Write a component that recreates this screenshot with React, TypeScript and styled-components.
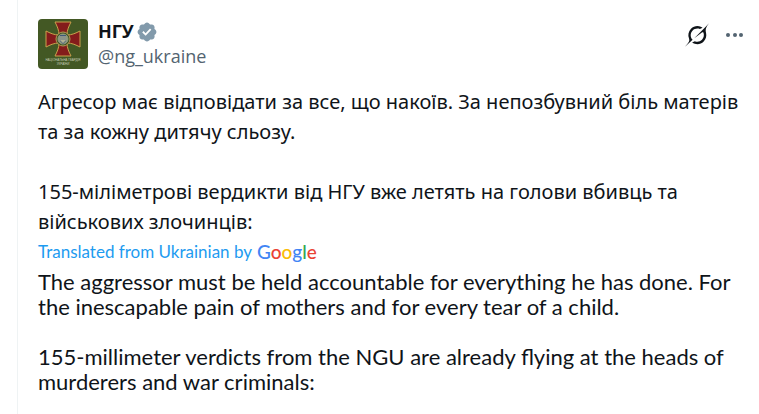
import React from "react";
import styled, { createGlobalStyle } from "styled-components";

const GlobalStyle = createGlobalStyle`
  * { box-sizing: border-box; }
  body {
    margin: 0;
    background: #ffffff;
    color: #0f1419;
    font-family: Lato, "Liberation Sans", sans-serif;
  }
`;

const Page = styled.main`
  min-height: 100vh;
  margin-left: 17px;
  padding: 19px 12px 16px 20px;
  border-left: 1px solid #eff3f4;
`;

const Header = styled.header`
  display: flex;
  align-items: flex-start;
  gap: 10px;
`;

const AvatarLink = styled.a`
  display: block;
  width: 50px;
  height: 50px;
  border-radius: 4px;
  overflow: hidden;
  flex: none;
`;

const Identity = styled.div`
  display: flex;
  flex-direction: column;
  flex: 1;
`;

const NameLink = styled.a`
  display: flex;
  align-items: center;
  gap: 2px;
  height: 25px;
  color: #0f1419;
  font: 700 18px/25px "Open Sans", sans-serif;
  text-decoration: none;
`;

const HandleLink = styled.a`
  color: #536471;
  font: 400 18px/25px "Open Sans", sans-serif;
  text-decoration: none;
`;

const Actions = styled.div`
  display: flex;
  gap: 14px;
  padding-top: 4px;
`;

const IconButton = styled.button`
  display: flex;
  padding: 0;
  border: 0;
  background: none;
  cursor: pointer;
`;

const Original = styled.p`
  margin: 18px 0 0;
  font: 400 20px/30px "Noto Sans", sans-serif;
  white-space: pre-line;
`;

const Attribution = styled.div`
  display: flex;
  align-items: center;
  gap: 5px;
  height: 30px;
`;

const SourceLink = styled.a`
  color: #1d9bf0;
  font-size: 17px;
  line-height: 24px;
  text-decoration: none;
`;

const GoogleLink = styled.a`
  font: 500 19px/24px Lato, sans-serif;
  text-decoration: none;
`;

const Letter = styled.span<{ $color: string }>`
  color: ${(p) => p.$color};
`;

const Translation = styled.p`
  margin: 2px 0 0;
  font-size: 22px;
  line-height: 25px;
  white-space: pre-line;
`;

const googleLetters: [string, string][] = [
  ["G", "#4285f4"],
  ["o", "#ea4335"],
  ["o", "#fbbc05"],
  ["g", "#4285f4"],
  ["l", "#34a853"],
  ["e", "#ea4335"],
];

const arm = "M-8 -17H8C6 -13 4 -9 4 -4H-4C-4 -9 -6 -13 -8 -17Z";

const Emblem = () => (
  <svg width="50" height="50" viewBox="0 0 50 50" aria-hidden="true">
    <rect width="50" height="50" fill="#435824" />
    <g transform="translate(25 20)" fill="#841c1b" stroke="#c9a24c" strokeWidth="1">
      {[0, 90, 180, 270].map((angle) => (
        <path key={angle} d={arm} transform={`rotate(${angle})`} />
      ))}
      <circle r="7" fill="#435824" stroke="#b39a58" />
      <circle r="5" fill="#8f9a80" stroke="#8f9a80" />
      <path d="M-3 -4H3V2L0 5L-3 2Z" fill="#3f5878" stroke="none" />
      <path d="M-2 -3V2H2V-3M0 -3V4" fill="none" stroke="#d8cf9c" />
    </g>
    <g fill="#c5cbb5" fontFamily="Liberation Sans" fontSize="3" textAnchor="middle">
      <text x="25" y="42">НАЦІОНАЛЬНА ГВАРДІЯ</text>
      <text x="25" y="46">УКРАЇНИ</text>
    </g>
  </svg>
);

const VerifiedBadge = () => (
  <svg width="22" height="22" viewBox="0 0 22 22" fill="#829aab" role="img" aria-label="Verified">
    <path d="M20.396 11c-.018-.646-.215-1.275-.57-1.816-.354-.54-.852-.972-1.438-1.246.223-.607.27-1.264.14-1.897-.131-.634-.437-1.218-.882-1.687-.47-.445-1.053-.75-1.687-.882-.633-.13-1.29-.083-1.897.14-.273-.587-.704-1.086-1.245-1.44S11.647 1.62 11 1.604c-.646.017-1.273.213-1.813.568s-.969.854-1.24 1.44c-.608-.223-1.267-.272-1.902-.14-.635.13-1.22.436-1.69.882-.445.47-.749 1.055-.878 1.688-.13.633-.08 1.29.144 1.896-.587.274-1.087.705-1.443 1.245-.356.54-.555 1.17-.574 1.817.02.647.218 1.276.574 1.817.356.54.856.972 1.443 1.245-.224.606-.274 1.263-.144 1.896.13.634.433 1.218.877 1.688.47.443 1.054.747 1.687.878.633.132 1.29.084 1.897-.136.274.586.705 1.084 1.246 1.439.54.354 1.17.551 1.816.569.647-.016 1.276-.213 1.817-.567s.972-.854 1.245-1.44c.604.239 1.266.296 1.903.164.636-.132 1.22-.447 1.68-.907.46-.46.776-1.044.908-1.681s.075-1.299-.165-1.903c.586-.274 1.084-.705 1.439-1.246.354-.54.551-1.17.569-1.816zM9.662 14.85l-3.429-3.428 1.293-1.302 2.072 2.072 4.4-4.794 1.347 1.246z" />
  </svg>
);

const GrokIcon = () => (
  <svg width="24" height="24" viewBox="0 0 33 32" fill="#0f1419" aria-hidden="true">
    <path d="M12.745 20.54l10.97-8.19c.539-.4 1.307-.244 1.564.38 1.349 3.288.746 7.241-1.938 9.955-2.683 2.714-6.417 3.31-9.83 1.954l-3.728 1.745c5.347 3.697 11.84 2.782 15.898-1.324 3.219-3.255 4.216-7.692 3.284-11.693l.008.009c-1.351-5.878.332-8.227 3.782-13.031L33 0l-4.54 4.59v-.014L12.743 20.544m-2.263 1.987c-3.837-3.707-3.175-9.446.1-12.755 2.42-2.449 6.388-3.448 9.852-1.979l3.72-1.737c-.67-.49-1.53-1.017-2.515-1.387-4.455-1.854-9.789-.931-13.41 2.728-3.483 3.523-4.579 8.94-2.697 13.561 1.405 3.454-.899 5.898-3.22 8.364C1.49 30.2.666 31.074 0 32l10.478-9.466" />
  </svg>
);

const MoreIcon = () => (
  <svg width="24" height="24" viewBox="0 0 24 24" fill="#536471" aria-hidden="true">
    <circle cx="5" cy="12" r="2" />
    <circle cx="12" cy="12" r="2" />
    <circle cx="18" cy="12" r="2" />
  </svg>
);

export default function App() {
  return (
    <>
      <GlobalStyle />
      <Page>
        <article>
          <Header>
            <AvatarLink href="#profile" aria-label="НГУ">
              <Emblem />
            </AvatarLink>
            <Identity>
              <NameLink href="#profile">
                НГУ
                <VerifiedBadge />
              </NameLink>
              <HandleLink href="#profile">@ng_ukraine</HandleLink>
            </Identity>
            <Actions>
              <IconButton type="button" aria-label="Grok">
                <GrokIcon />
              </IconButton>
              <IconButton type="button" aria-label="More">
                <MoreIcon />
              </IconButton>
            </Actions>
          </Header>
          <Original lang="uk">
            {"Агресор має відповідати за все, що накоїв. За непозбувний біль матерів та за кожну дитячу сльозу.\n\n155-міліметрові вердикти від НГУ вже летять на голови вбивць та військових злочинців:"}
          </Original>
          <Attribution>
            <SourceLink href="#translation">Translated from Ukrainian by</SourceLink>
            <GoogleLink href="#google" aria-label="Google">
              {googleLetters.map(([letter, color], i) => (
                <Letter key={i} $color={color}>
                  {letter}
                </Letter>
              ))}
            </GoogleLink>
          </Attribution>
          <Translation lang="en">
            {"The aggressor must be held accountable for everything he has done. For the inescapable pain of mothers and for every tear of a child.\n\n155-millimeter verdicts from the NGU are already flying at the heads of murderers and war criminals:"}
          </Translation>
        </article>
      </Page>
    </>
  );
}
